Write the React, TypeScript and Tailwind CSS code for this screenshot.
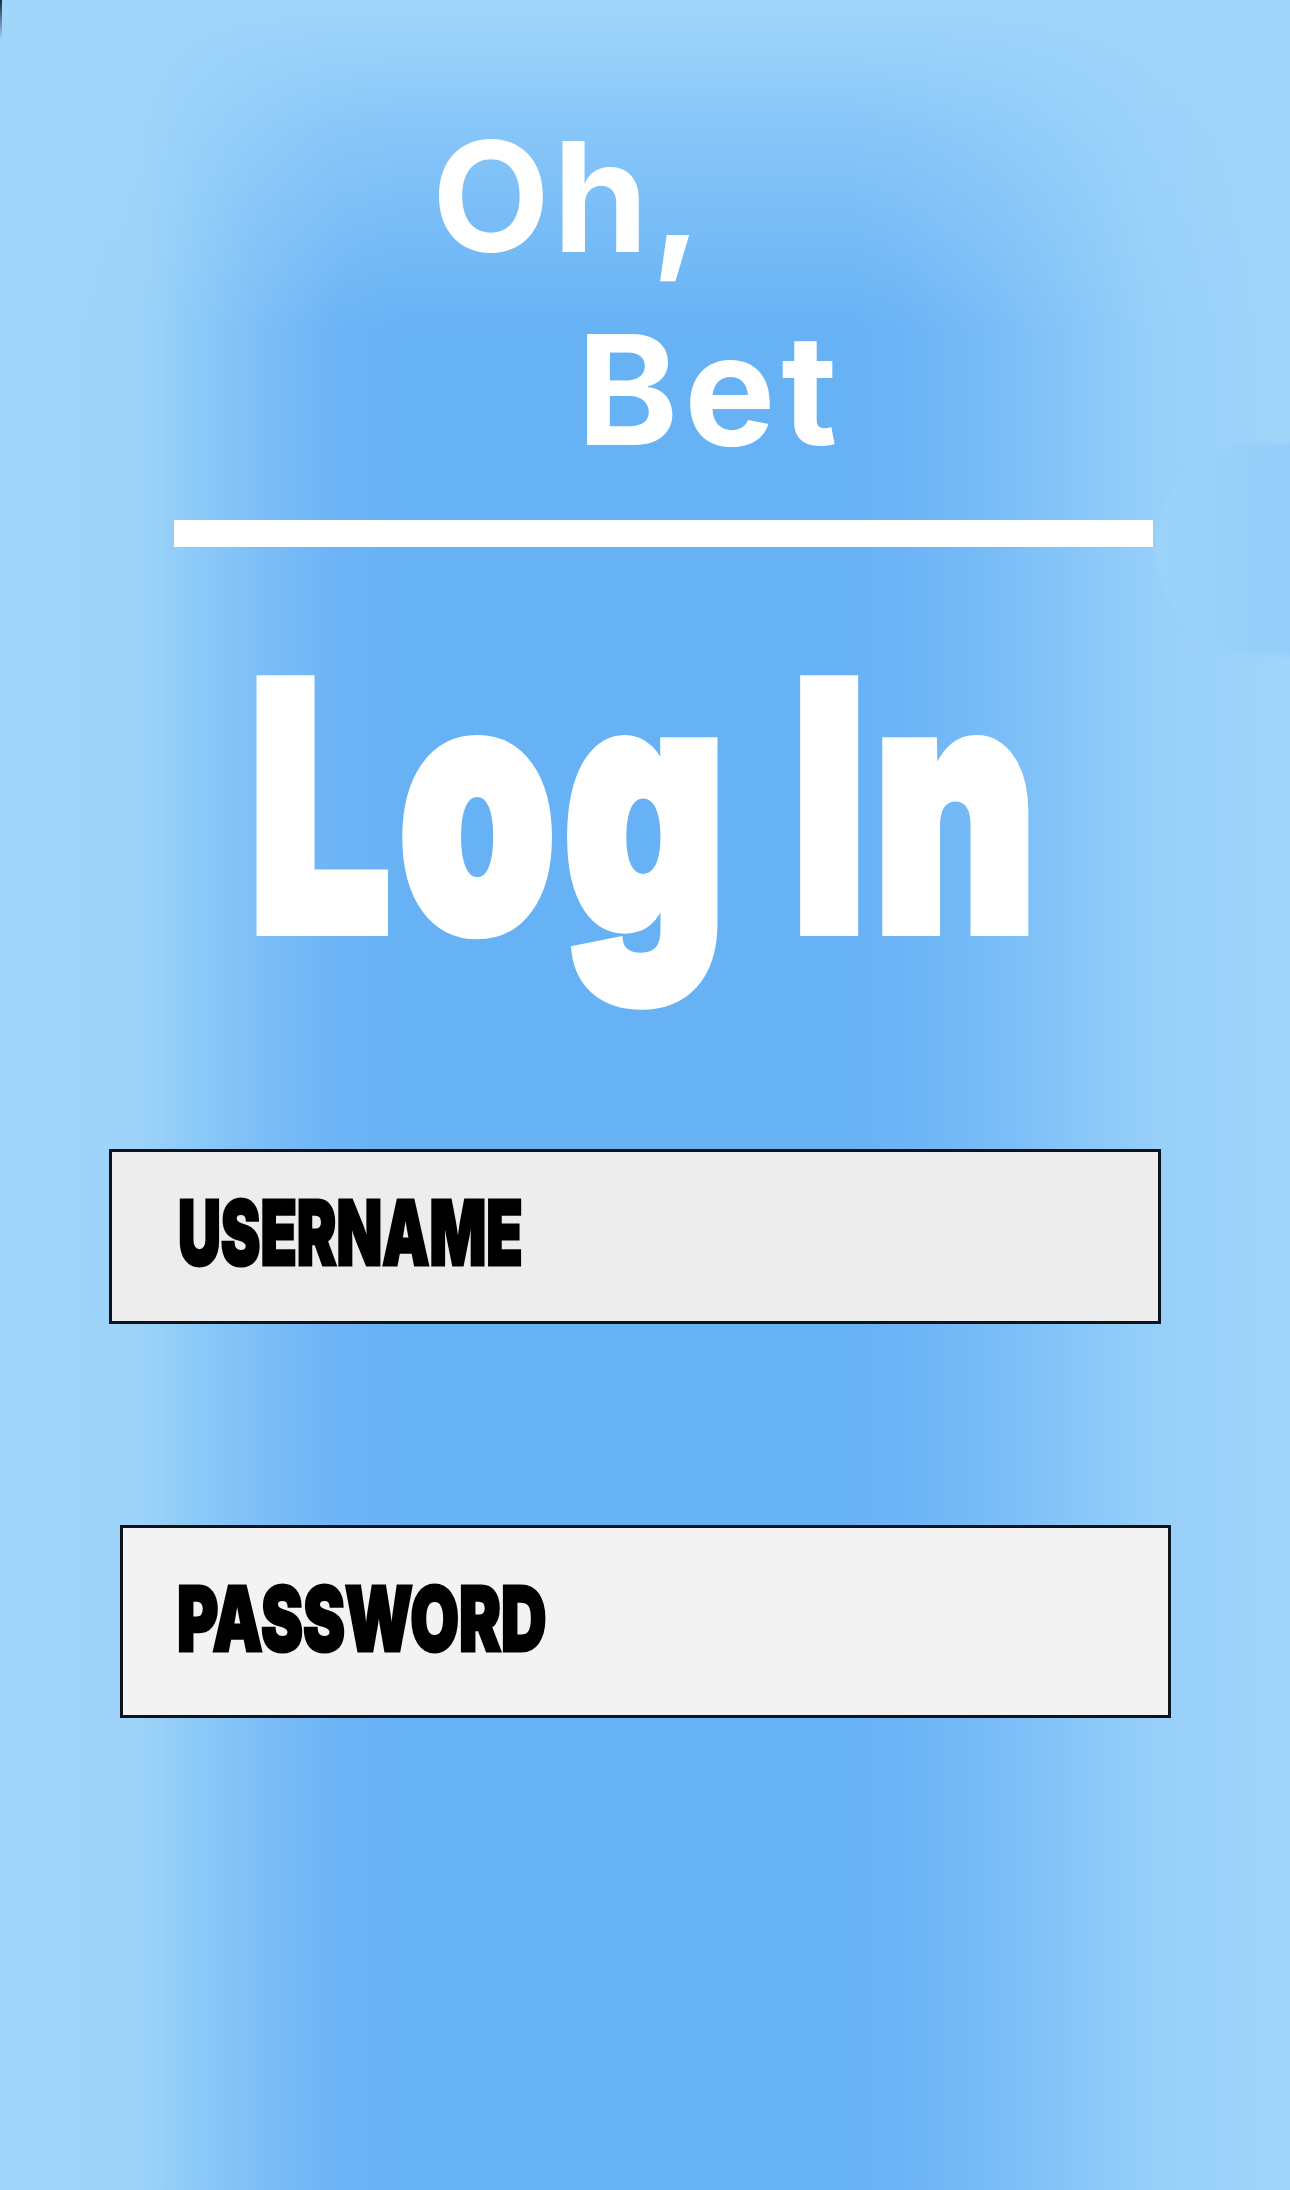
import React from "react";

export default function App() {
  return (
    <div className="relative w-[1290px] h-[2190px] overflow-hidden bg-[linear-gradient(to_bottom,#a1d6fb_0px,rgba(161,214,251,0.55)_130px,rgba(161,214,251,0)_330px),linear-gradient(to_right,#a1d6fb_0px,#9dd3f9_140px,#8ccaf8_195px,#7bbdf7_265px,#6cb4f6_340px,#67b2f5_400px,#67b2f5_850px,#6cb4f6_900px,#78bcf7_990px,#86c6f8_1070px,#96cff9_1150px,#a1d6fb_1290px)]">
      {/* tiny dark edge at top-left */}
      <div className="absolute left-0 top-0 w-[2px] h-[40px] bg-[linear-gradient(to_bottom,#1c2d40,rgba(28,45,64,0))]" />
      {/* faint blob on the right */}
      <div className="absolute left-[1155px] top-[443px] w-[240px] h-[212px] rounded-[110px] bg-[linear-gradient(to_right,#9cd3fa,#8cc9f8)] blur-[2px]" />

      <div className="relative flex flex-col font-['Inter',sans-serif]">
        <div className="mt-[120px] ml-[432px] text-[153px] leading-none font-bold text-white tracking-[3px]">
          Oh,
        </div>
        <div className="mt-[40px] ml-[577px] text-[153px] leading-none font-bold text-white tracking-[6px]">
          Bet
        </div>
        <div className="mt-[54px] ml-[174px] w-[979px] h-[27px] bg-white" />

        <div className="mt-[88px] h-[342px] flex justify-center">
          <span className="inline-block ml-[4px] font-black text-[342px] leading-none text-white scale-x-[0.73] [-webkit-text-stroke:12px_white] tracking-[12px]">
            Log In
          </span>
        </div>

        <div className="mt-[172px] ml-[109px] w-[1052px] h-[175px] border-[3px] border-[#0e141b] bg-[#eeeded] pt-[36px] pl-[66px]">
          <span className="inline-block origin-left font-black text-[90px] leading-none text-black scale-x-[0.66] [-webkit-text-stroke:3px_black]">
            USERNAME
          </span>
        </div>

        <div className="mt-[201px] ml-[120px] w-[1051px] h-[193px] border-[3px] border-[#0e141b] bg-[#f3f3f3] pt-[46px] pl-[54px]">
          <span className="inline-block origin-left font-black text-[90px] leading-none text-black scale-x-[0.70] [-webkit-text-stroke:3px_black]">
            PASSWORD
          </span>
        </div>
      </div>
    </div>
  );
}
